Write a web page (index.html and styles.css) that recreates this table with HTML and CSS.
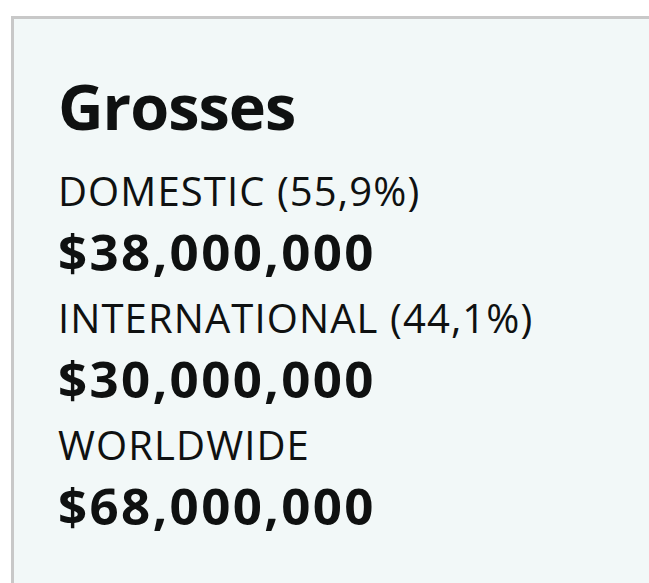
FILE: index.html
```html
<!DOCTYPE html>
<html lang="en">
<head>
<meta charset="utf-8">
<title>Grosses</title>
<link rel="stylesheet" href="styles.css">
</head>
<body>
<section class="card">
  <h2 class="card-title">Grosses</h2>
  <dl class="grosses">
    <dt class="grosses-label">DOMESTIC (55,9%)</dt>
    <dd class="grosses-amount">$38,000,000</dd>
    <dt class="grosses-label">INTERNATIONAL (44,1%)</dt>
    <dd class="grosses-amount">$30,000,000</dd>
    <dt class="grosses-label">WORLDWIDE</dt>
    <dd class="grosses-amount">$68,000,000</dd>
  </dl>
</section>
</body>
</html>
```
FILE: styles.css
```css
html, body {
  height: 100%;
}
body {
  margin: 0;
  overflow: hidden;
  background: #ffffff;
  color: #0f1111;
  font-family: "Open Sans", "Noto Sans", sans-serif;
}
.card {
  box-sizing: border-box;
  height: calc(100% - 16px);
  margin: 16px 0 0 11px;
  padding: 49px 0 0 44px;
  background: #f2f8f8;
  border-top: 3px solid #c8c8c8;
  border-left: 3px solid #c8c8c8;
  display: flex;
  flex-direction: column;
}
.card-title {
  margin: 0 0 13px;
  font-size: 63px;
  line-height: 76px;
  font-weight: 700;
  letter-spacing: -1px;
}
.grosses {
  margin: 0;
  display: flex;
  flex-direction: column;
}
.grosses-label {
  margin: 7px 0 0;
  font-size: 40px;
  line-height: 54px;
  font-weight: 400;
  letter-spacing: 1.1px;
}
.grosses-amount {
  margin: 0;
  font-size: 51px;
  line-height: 66px;
  font-weight: 700;
  letter-spacing: 2.4px;
}
```
